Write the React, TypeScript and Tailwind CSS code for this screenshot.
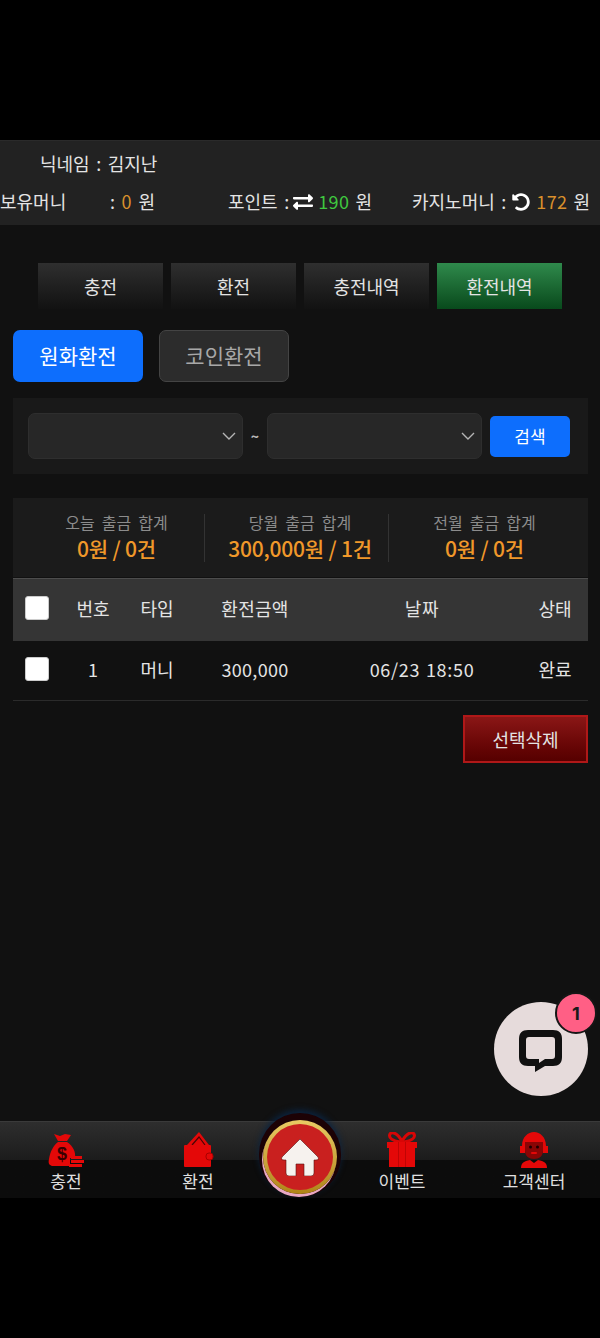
import {FaExchangeAlt, FaUndoAlt} from "react-icons/fa";

const tabs = ["충전", "환전", "충전내역", "환전내역"];
const totals = [
    {label: "오늘 출금 합계", value: "0원 / 0건", box: "w-[191px] pl-[16px]"},
    {label: "당월 출금 합계", value: "300,000원 / 1건", box: "w-[184px] pl-[7px] border-l border-[#333]"},
    {label: "전월 출금 합계", value: "0원 / 0건", box: "w-[200px] pr-[8px] border-l border-[#333]"},
];

function Chevron() {
    return (
        <svg className="absolute right-[6px] top-[16px] w-[16px] h-[14px]" viewBox="0 0 16 14" fill="none" stroke="#b5b5b5" strokeWidth="1.4">
            <path d="M2 4l6 6 6-6" />
        </svg>
    );
}

function DateSelect() {
    return (
        <div className="relative w-[215px] h-[46px]">
            <select className="w-full h-full appearance-none rounded-[7px] bg-[#272727] border border-[#2e2e2e] outline-none" />
            <Chevron />
        </div>
    );
}

function Check() {
    return <input type="checkbox" className="appearance-none block w-[24px] h-[24px] rounded-[3px] bg-white border border-[#ccc]" />;
}

function Row({head, cells}: {head?: boolean; cells: string[]}) {
    const rowClass = head
        ? "h-[63px] bg-[#353535] border-t border-[#4d4d4d] pb-[4px]"
        : "h-[60px] border-b border-[#2b2b2b] pb-[3px]";
    return (
        <div className={`flex items-center text-[18px] text-[#e4e4e4] ${rowClass}`}>
            <div className="w-[47px] flex justify-center">
                <Check />
            </div>
            <div className="w-[66px] text-center">{cells[0]}</div>
            <div className="w-[62px] text-center">{cells[1]}</div>
            <div className="w-[134px] text-center tracking-[0.3px]">{cells[2]}</div>
            <div className="w-[200px] text-center tracking-[0.7px] [word-spacing:1px]">{cells[3]}</div>
            <div className="w-[66px] text-center">{cells[4]}</div>
        </div>
    );
}

function BagIcon() {
    return (
        <svg width="36" height="36" viewBox="0 0 36 36" fill="#e40808">
            <path d="M6 2l6 2 5-2 6 1-4 6h-9z" />
            <path d="M10 10h9c6 4 9 10 8 16H22v8H4c-3-1-4-3-3-7 1-7 4-13 9-17z" />
            <path d="M23 24h11v3H23zM23 28h13v3H23zM21 32h13v3H21z" />
            <text x="14" y="28" fontSize="18" fontWeight="700" fill="#3a0000" textAnchor="middle" fontFamily="Liberation Sans">$</text>
        </svg>
    );
}

function WalletIcon() {
    return (
        <svg width="34" height="36" viewBox="0 0 34 36" fill="#e40808">
            <path d="M6 13L18 0l10 13z" />
            <path d="M11 13l7-8 6 8" fill="none" stroke="#4a0505" strokeWidth="1.200" />
            <rect x="3" y="13" width="27" height="22" rx="1" />
            <rect x="25" y="21" width="7" height="7" rx="3" stroke="#a80000" strokeWidth="1" />
        </svg>
    );
}

function GiftIcon() {
    return (
        <svg width="32" height="36" viewBox="0 0 32 36" fill="#e40808">
            <path d="M16 9C11 1 6-1 4 2c-2 4 3 7 10 8zM16 9C21 1 26-1 28 2c2 4-3 7-10 8z" fill="none" stroke="#d80606" strokeWidth="3" />
            <path d="M1 10h30v6H1zM3 16h26v19H3z" />
            <path d="M12 10h1v25h-1zM19 10h1v25h-1z" fill="#c00404" />
        </svg>
    );
}

function AgentIcon() {
    return (
        <svg width="32" height="36" viewBox="0 0 32 36" fill="#e40808">
            <path d="M4 14C4 5 10 0 16 0s12 5 12 14h2v7h-5v-7c0-2-1-3-2-4H9c-1 1-2 2-2 4v7H2v-7z" />
            <path d="M7 10h18v9c0 5-4 8-9 8s-9-3-9-8z" fill="#8a0505" />
            <path d="M3 36c0-5 3-7 9-8l4 3 4-3c6 1 9 3 9 8z" />
            <circle cx="12.500" cy="15" r="1.500" fill="#1a0000" />
            <circle cx="19.500" cy="15" r="1.500" fill="#1a0000" />
            <rect x="13" y="20" width="6" height="2" rx="1" fill="#e40808" />
        </svg>
    );
}

function NavItem({label, icon}: {label: string; icon: React.ReactNode}) {
    return (
        <div className="w-[132px] flex flex-col items-center">
            <div className="h-[38px] pt-[10px] flex items-start justify-center">{icon}</div>
            <div className="mt-[11px] text-[17px] leading-[20px] text-[#e0e0e0]">{label}</div>
        </div>
    );
}

export default function App() {
    return (
        <div className="relative w-[600px] h-[1338px] bg-black pt-[140px] font-['Noto_Sans_CJK_KR',sans-serif] overflow-hidden">
            <div className="h-[1058px] bg-[#111] flex flex-col">
                {/* user info */}
                <div className="h-[85px] bg-[#222] border-t border-[#2a2a2a] text-[18px] text-[#e4e4e4] [word-spacing:2.5px]">
                    <div className="pl-[40px] pt-[9px] leading-[27px]">닉네임 : 김지난</div>
                    <div className="flex items-center mt-[11px] leading-[27px]">
                        <span className="w-[110px]">보유머니</span>
                        <span className="w-[118px]">: <span className="text-[#d9902c] tracking-[0.4px]">0</span> 원</span>
                        <span className="flex items-center w-[184px]">
                            포인트 :<FaExchangeAlt className="ml-[4px] mr-[5px] text-[20px] text-white" />
                            <span className="text-[#3fc83f] tracking-[0.4px]">190</span>
                            <span className="ml-[6px]">원</span>
                        </span>
                        <span className="flex items-center whitespace-nowrap">
                            카지노머니 :<FaUndoAlt className="ml-[6px] mr-[6px] text-[18px] text-white" />
                            <span className="text-[#d9902c] tracking-[0.4px]">172</span>
                            <span className="ml-[6px]">원</span>
                        </span>
                    </div>
                </div>

                {/* tabs */}
                <div className="flex gap-[8px] pl-[38px] mt-[38px]">
                    {tabs.map((t, i) => (
                        <div
                            key={t}
                            className={`w-[125px] h-[46px] flex items-center justify-center text-[18px] text-[#e4e4e4] bg-linear-to-b ${
                                i === 3 ? "from-[#2f8a4c] to-[#084a1c]" : "from-[#2f2f2f] to-[#121212]"
                            }`}
                        >
                            {t}
                        </div>
                    ))}
                </div>

                <div className="flex gap-[16px] pl-[13px] mt-[21px]">
                    <button className="w-[130px] h-[52px] rounded-[7px] bg-[#0d6efd] text-white text-[21px]">원화환전</button>
                    <button className="w-[130px] h-[52px] rounded-[7px] bg-[#2c2c2c] border border-[#444] text-[#a8a8a8] text-[21px]">코인환전</button>
                </div>

                {/* search */}
                <div className="ml-[13px] mr-[12px] mt-[16px] h-[76px] bg-[#191919] flex items-center pl-[15px]">
                    <DateSelect />
                    <span className="w-[24px] text-center text-[14px] font-bold text-[#bbb]">~</span>
                    <DateSelect />
                    <button className="ml-[8px] w-[80px] h-[41px] rounded-[5px] bg-[#0d6efd] text-white text-[17px]">검색</button>
                </div>

                {/* totals */}
                <div className="ml-[13px] mr-[12px] mt-[24px] h-[79px] bg-[#1b1b1b] flex items-center">
                    {totals.map((t) => (
                        <div key={t.label} className={`h-[48px] flex flex-col items-center justify-center ${t.box}`}>
                            <div className="text-[16px] leading-[22px] text-[#8c8c8c] [word-spacing:3.5px] -mt-[2px]">{t.label}</div>
                            <div className="mt-[1px] text-[21px] leading-[28px] font-medium text-[#f0982a] tracking-[-0.2px]">{t.value}</div>
                        </div>
                    ))}
                </div>

                {/* table */}
                <div className="ml-[13px] mr-[12px] mt-[1px]">
                    <Row head cells={["번호", "타입", "환전금액", "날짜", "상태"]} />
                    <Row cells={["1", "머니", "300,000", "06/23 18:50", "완료"]} />
                </div>

                <div className="flex justify-end mr-[12px] mt-[14px]">
                    <button className="w-[125px] h-[48px] border-2 border-[#b01818] bg-linear-to-b from-[#8a1616] to-[#560000] text-[18px] text-[#e4e4e4]">선택삭제</button>
                </div>

                {/* bottom nav */}
                <div className="relative mt-auto h-[77px] bg-linear-to-b from-[#2e2e2e] via-[#1c1c1c] via-50% to-[#0c0c0c] to-50% border-t border-[#3a3a3a] flex">
                    <NavItem label="충전" icon={<BagIcon />} />
                    <NavItem label="환전" icon={<WalletIcon />} />
                    <div className="w-[72px]" />
                    <NavItem label="이벤트" icon={<GiftIcon />} />
                    <NavItem label="고객센터" icon={<AgentIcon />} />

                    <div className="absolute left-[259px] top-[-9px] w-[82px] h-[84px] rounded-full bg-[#1c0205] shadow-[0_-3px_6px_#0b2440] flex items-center justify-center">
                        <div className="mt-[4px] w-[74px] h-[74px] rounded-full bg-linear-to-b from-[#e9cb63] to-[#b08414] shadow-[-1px_3px_0_#e9a9c4] p-[4px]">
                            <div className="w-full h-full rounded-full bg-radial from-[#c9201f] from-75% to-[#e2403c] flex items-center justify-center">
                                <svg width="38" height="38" viewBox="0 0 38 38" fill="#f6f2ee">
                                    <path d="M19 1L37 19q1.500 3-2 3h-2v13q0 3-3 3h-7V26h-8v12H8q-3 0-3-3V22H3q-3.500 0-2-3z" stroke="#5a1010" strokeWidth="0.600" />
                                </svg>
                            </div>
                        </div>
                    </div>
                </div>
            </div>

            {/* chat bubble */}
            <div className="absolute left-[494px] top-[1002px] w-[94px] h-[94px] rounded-full bg-[#e6dbdb] flex items-center justify-center">
                <svg width="46" height="46" viewBox="0 0 46 46" fill="#111" fillRule="evenodd">
                    <path d="M10 4h25c6 0 9 3 9 9v18c0 6-3 9-9 9h-8l-10 6v-6h-7c-6 0-9-3-9-9V13c0-6 3-9 9-9zM11 11c-2 0-3 1-3 3v16c0 2 1 3 3 3h10v4l6-4h7c2 0 3-1 3-3V14c0-2-1-3-3-3z" />
                </svg>
                <div className="absolute left-[61px] top-[-10px] w-[42px] h-[42px] rounded-full bg-[#ff5f85] border-2 border-[#161616] flex items-center justify-center text-[18px] font-bold text-[#1a1a1a] font-['Inter',sans-serif]">1</div>
            </div>
        </div>
    );
}
